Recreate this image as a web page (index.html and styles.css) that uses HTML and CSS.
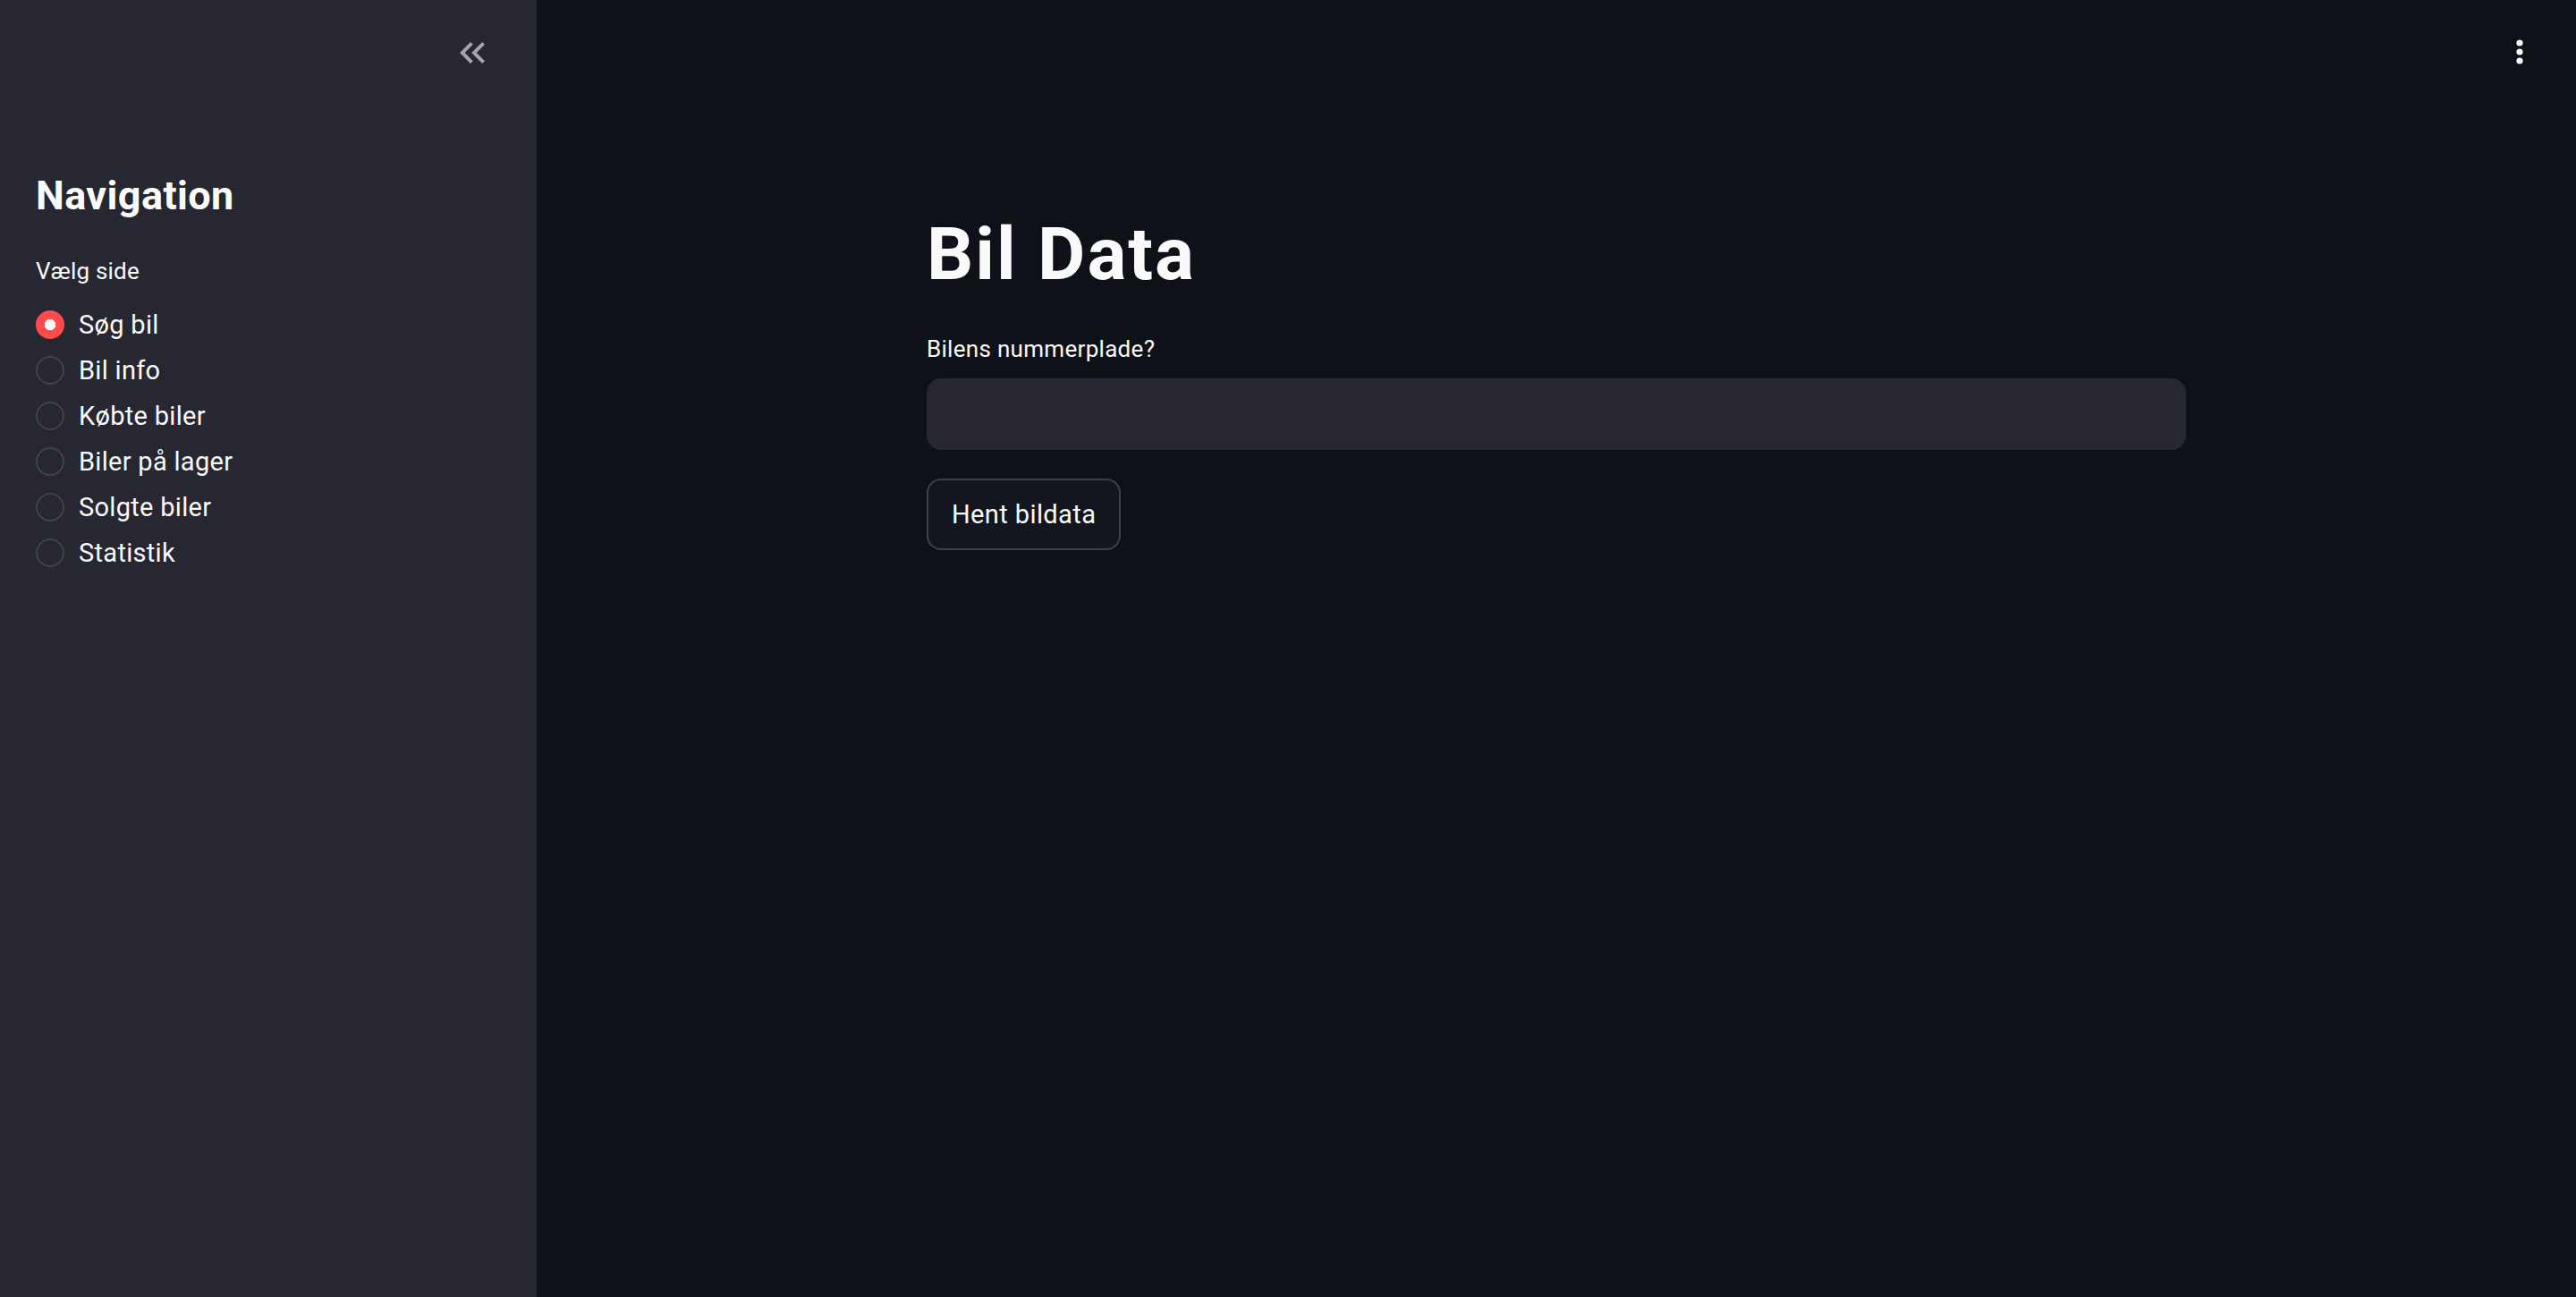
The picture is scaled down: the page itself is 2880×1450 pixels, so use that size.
FILE: index.html
```html
<!DOCTYPE html>
<html>

<head>
  <meta charset="UTF-8">
  <meta name="viewport" content="width=device-width, initial-scale=1.0">
  <title>Bil Data</title>

  <link rel="stylesheet" href="styles.css">
</head>

<body>
  <div class="sidebar">
    <div class="sidebar-head">
      <button class="collapse" title="Luk sidebar">
        <svg width="48" height="48" viewBox="0 0 24 24">
          <path d="M17.59 18L19 16.59 14.42 12 19 7.41 17.59 6l-6 6z M11 18l1.41-1.41L7.83 12l4.58-4.59L11 6l-6 6z" fill="currentColor" />
        </svg>
      </button>
    </div>

    <h2 class="nav-title">Navigation</h2>
    <div class="radio-label">Vælg side</div>
    <div class="radio-group">
      <label class="radio checked"><span class="dot"></span>Søg bil</label>
      <label class="radio"><span class="dot"></span>Bil info</label>
      <label class="radio"><span class="dot"></span>Købte biler</label>
      <label class="radio"><span class="dot"></span>Biler på lager</label>
      <label class="radio"><span class="dot"></span>Solgte biler</label>
      <label class="radio"><span class="dot"></span>Statistik</label>
    </div>
  </div>

  <div class="main">
    <div class="toolbar">
      <button class="menu" title="Menu">
        <svg width="24" height="40" viewBox="0 0 24 40">
          <circle cx="12" cy="10" r="3.6" fill="currentColor" />
          <circle cx="12" cy="20" r="3.6" fill="currentColor" />
          <circle cx="12" cy="30" r="3.6" fill="currentColor" />
        </svg>
      </button>
    </div>

    <div class="block">
      <h1>Bil Data</h1>
      <div class="field-label">Bilens nummerplade?</div>
      <input class="text-input" type="text">
      <button class="btn">Hent bildata</button>
    </div>
  </div>
</body>

</html>
```

FILE: styles.css
```css
* {
  box-sizing: border-box;
}

body {
  margin: 0;
  height: 1450px;
  display: flex;
  font-family: Roboto, "Liberation Sans", sans-serif;
  color: #fafafa;
  background: #0e1117;
  overflow: hidden;
}

button {
  font-family: inherit;
  color: inherit;
  cursor: pointer;
}

/* sidebar */

.sidebar {
  width: 600px;
  flex-shrink: 0;
  background: #262730;
  padding: 0 40px;
}

.sidebar-head {
  display: flex;
  justify-content: flex-end;
  padding: 35px 8px 0 0;
}

.collapse {
  display: block;
  width: 48px;
  height: 48px;
  padding: 0;
  border: none;
  background: none;
  color: #a5a5a8;
}

.collapse svg {
  display: block;
}

.nav-title {
  margin: 109px 0 0;
  font-size: 45px;
  font-weight: 700;
  line-height: 54px;
  letter-spacing: 0.4px;
}

.radio-label {
  margin-top: 37px;
  font-size: 26px;
  line-height: 40px;
  letter-spacing: 0.2px;
}

.radio-group {
  margin-top: 14px;
}

.radio {
  display: flex;
  align-items: center;
  gap: 16px;
  height: 51px;
  font-size: 29px;
  letter-spacing: 0.3px;
}

.dot {
  width: 32px;
  height: 32px;
  border-radius: 50%;
  border: 2px solid #41434c;
  flex-shrink: 0;
}

.radio.checked .dot {
  border: none;
  background: radial-gradient(circle, #fafafa 0 6px, #ff4b4b 6.5px);
}

/* main */

.main {
  flex: 1;
}

.toolbar {
  display: flex;
  justify-content: flex-end;
  padding: 38px 51px 0 0;
}

.menu {
  display: block;
  width: 24px;
  height: 40px;
  padding: 0;
  border: none;
  background: none;
}

.menu svg {
  display: block;
}

.block {
  width: 1408px;
  margin: 0 auto;
}

h1 {
  margin: 157px 0 0;
  font-size: 82px;
  font-weight: 700;
  line-height: 98px;
  letter-spacing: 2px;
}

.field-label {
  margin-top: 37px;
  font-size: 26px;
  line-height: 40px;
  letter-spacing: 0.3px;
}

.text-input {
  display: block;
  width: 100%;
  height: 80px;
  margin-top: 13px;
  border: none;
  border-radius: 16px;
  background: #262730;
  outline: none;
}

.btn {
  display: block;
  height: 80px;
  margin-top: 32px;
  padding: 0 26px;
  font-size: 29px;
  letter-spacing: 0.4px;
  border: 2px solid #3e4047;
  border-radius: 16px;
  background: #13161e;
}
```
